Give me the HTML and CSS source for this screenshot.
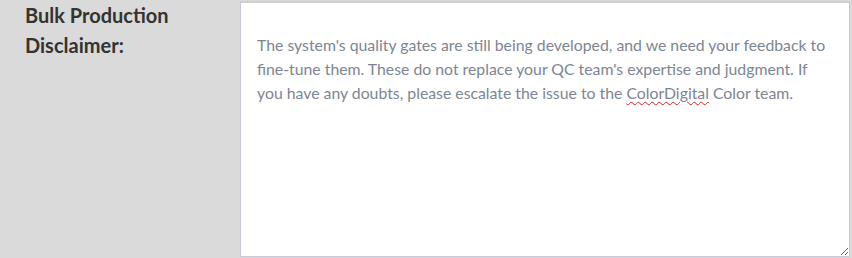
FILE: index.html
```html
<!DOCTYPE html>
<html lang="en">
  <head>
    <meta charset="UTF-8" />
    <title>Bulk Production Disclaimer</title>
    <link rel="stylesheet" href="styles.css">
  </head>
  <body>
    <div class="field-row">
      <label class="field-label" for="disclaimer">Bulk Production Disclaimer:</label>
      <div id="disclaimer" class="field-box">The system's quality gates are still being developed, and we need your feedback to fine-tune them. These do not replace your QC team's expertise and judgment. If you have any doubts, please escalate the issue to the <span class="misspelled">ColorDigital</span> Color team.</div>
    </div>
  </body>
</html>
```

FILE: styles.css
```css
body {
  margin: 0;
  background: #dadada;
  font-family: Lato, "Liberation Sans", sans-serif;
  overflow: hidden;
}

.field-row {
  display: flex;
  align-items: flex-start;
  height: 258px;
}

.field-label {
  width: 215px;
  padding-left: 25px;
  font-size: 20px;
  font-weight: bold;
  line-height: 30px;
  color: #333;
}

.field-box {
  box-sizing: border-box;
  margin-top: 1px;
  width: 610px;
  height: 256px;
  padding: 30px 23px 0 16px;
  background: #fff;
  border: 1px solid #c9c9d6;
  border-top: 2px solid #cfcfd6;
  font-size: 15.8px;
  line-height: 24px;
  color: #7e8592;
  resize: both;
  overflow: auto;
}

.misspelled {
  text-decoration: underline wavy #e02020;
  text-decoration-thickness: 1px;
  text-underline-offset: 2px;
}
```
